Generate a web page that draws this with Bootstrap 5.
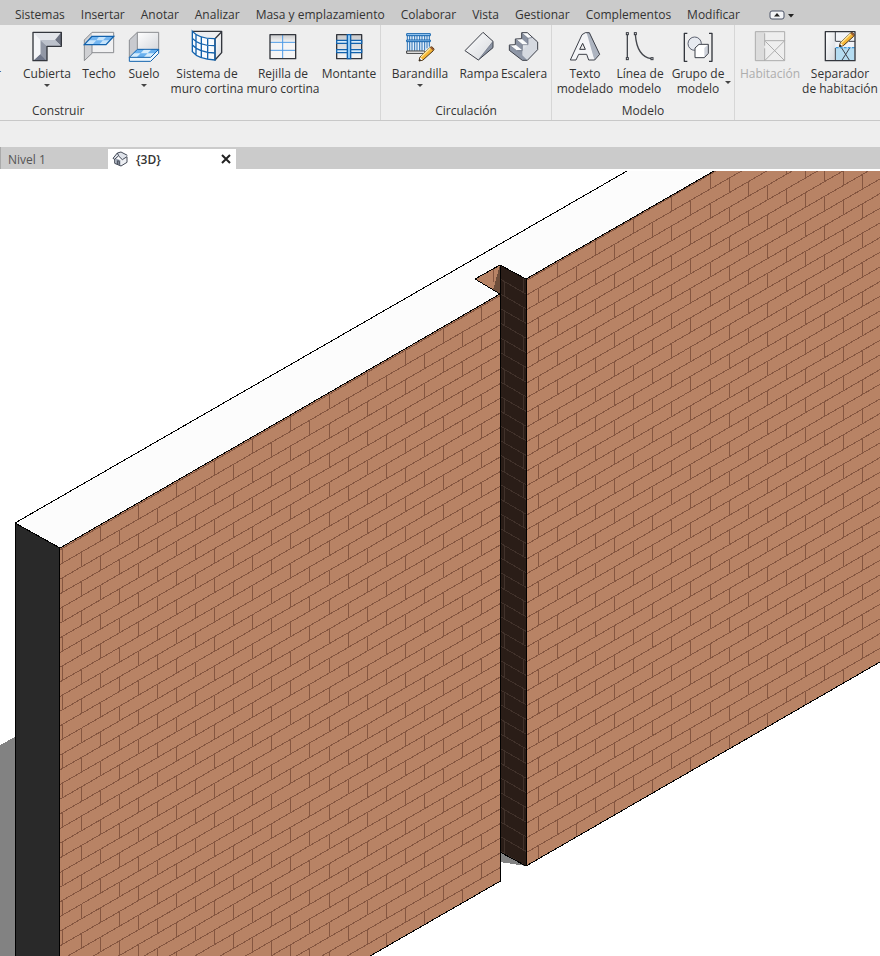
<!DOCTYPE html>
<html lang="es">
<head>
<meta charset="utf-8">
<meta name="viewport" content="width=device-width, initial-scale=1">
<title>{3D}</title>
<link href="https://cdn.jsdelivr.net/npm/bootstrap@5.3.0/dist/css/bootstrap.min.css" rel="stylesheet">
<style>
body { font-family: "Open Sans", "Noto Sans", sans-serif; font-size: 12px; line-height: 15px; color: #333; background: #fff; overflow-x: hidden; }
button { font: inherit; color: inherit; background: none; border: 0; padding: 0; }
.menu-bar { background: #cbcbcb; height: 25px; padding: 4px 0 0 15px; gap: 16px; }
.menu-bar a { color: #333; text-decoration: none; white-space: nowrap; line-height: 21px; }
.menu-bar button { margin-left: 13px; }
.ribbon { background: #eee; border-bottom: 1px solid #c8c8c8; height: 96px; overflow: hidden; }
.panel { border-right: 1px solid #d6d6d6; height: 95px; padding-top: 5px; flex: none; }
.panel:last-child { border-right: 0; flex: 1 0 auto; }
.panel-build { width: 381px; } .panel-stairs { width: 171px; } .panel-model { width: 183px; }
.tools { height: 72px; }
.tool { display: flex; flex: none; flex-direction: column; align-items: center; white-space: nowrap; position: relative; }
.tool svg { width: 32px; height: 32px; margin-bottom: 4px; flex: none; overflow: visible; }
.tool:disabled { color: #adadad; }
.drop::after { content: ""; border: 3px solid transparent; border-top-color: #444; border-bottom: 0; margin-top: 3px; }
.drop-side::after { position: absolute; right: 3px; bottom: 18px; margin: 0; }
.t-20 { width: 20px; } .t-40 { width: 40px; } .t-44 { width: 44px; } .t-50 { width: 50px; } .t-54 { width: 54px; }
.t-66 { width: 66px; } .t-70 { width: 70px; } .t-72 { width: 72px; } .t-78 { width: 78px; } .t-86 { width: 86px; }
.cut { overflow: hidden; align-items: flex-end; padding: 36px 19px 0 0; }
.panel-name { text-align: center; line-height: 17px; }
.first-name { text-align: left; padding-left: 32px; }
.options-bar { background: #eee; height: 26px; }
.view-tabs { background: #cbcbcb; height: 22px; }
.view-tab { width: 108px; padding-left: 7px; color: #555; line-height: 26px; text-align: left; border-left: 1px solid #aaa; }
.view-tab-on { width: 128px; height: 20px; margin-top: 2px; background: #fff; padding: 0 5px 0 4px; }
.view-tab-on b { font-weight: 600; margin-left: 7px; }
.canvas3d { padding-top: 2px; }
.canvas3d svg { display: block; width: 100%; height: auto; }
.k { fill: none; stroke: #33363d; stroke-width: 4; stroke-linejoin: round; }
.k-thin { fill: none; stroke: #3d4049; stroke-width: 3; stroke-linejoin: round; }
.g { fill: none; stroke: #8a8c90; stroke-width: 3; }
.b { fill: none; stroke: #1262ad; stroke-width: 4; }
.b-thin { fill: none; stroke: #1262ad; stroke-width: 3; }
</style>
<script src="https://cdn.jsdelivr.net/npm/bootstrap@5.3.0/dist/js/bootstrap.bundle.min.js"></script>
</head>
<body>
<svg width="0" height="0" class="position-absolute" aria-hidden="true">
  <defs>
    <linearGradient id="gSheet" x1="0" y1="0" x2="1" y2="1"><stop offset="0" stop-color="#fff"/><stop offset="1" stop-color="#d5d8dd"/></linearGradient>
    <linearGradient id="gDown" x1="0" y1="0" x2="0" y2="1"><stop offset="0" stop-color="#c9cacc"/><stop offset="1" stop-color="#f6f6f6"/></linearGradient>
    <g id="pencil">
      <path d="M0 43 L3 31 L34 2 Q38 -2 43 4 Q47 8 43 12 L12 40 Z" fill="#f5b637" stroke="#4a3216" stroke-width="3"/>
      <path d="M6 31 L34 4" stroke="#ffe99a" stroke-width="4"/>
      <path d="M33 3 Q38 -1 42 4 Q46 9 42 12 Z" fill="#9b5b34"/>
      <path d="M2 41 L4 32 L11 39 Z" fill="#fff"/><path d="M0 43 L2 36 L7 41 Z" fill="#222"/>
    </g>
  </defs>
</svg>

<nav class="menu-bar d-flex">
  <a href="#">Sistemas</a><a href="#">Insertar</a><a href="#">Anotar</a><a href="#">Analizar</a><a href="#">Masa y emplazamiento</a><a href="#">Colaborar</a><a href="#">Vista</a><a href="#">Gestionar</a><a href="#">Complementos</a><a href="#">Modificar</a>
  <button type="button" class="d-flex align-items-center" aria-label="Minimizar cinta">
    <svg width="26" height="10" viewBox="0 0 26 10"><rect x="1" y="1" width="14" height="8" rx="2" fill="#f2f3f6" stroke="#4b5266"/><path d="M5 6.500 L8 3 L11 6.500 Z" fill="#222"/><path d="M19 4 H25 L22 7.500 Z" fill="#222"/></svg>
  </button>
</nav>

<div class="ribbon d-flex">
  <section class="panel panel-build">
    <div class="tools d-flex">
      <button type="button" class="tool t-20 cut">Pilar</button>
      <button type="button" class="tool drop t-54"><svg viewBox="91 90 96 96"><path d="M97 97 H182 V139 H139 V182 H97 Z" fill="#e8eaee"/><path d="M97 97 H182 L163 120 H119 Z" fill="#e3e5ea"/><path d="M182 97 L163 120 L182 139 Z" fill="#6d7382"/><path d="M119 120 H163 L182 139 H139 Z" fill="#bcc1cb"/><path d="M119 120 L139 139 V182 L119 162 Z" fill="#9298a6"/><path d="M97 182 L119 162 L139 182 Z" fill="#70778a"/><path d="M97 97 L119 120 V162 L97 182 Z" fill="#f4f5f8"/><path class="k" d="M97 97 H182 V139 H139 V182 H97 Z"/></svg>Cubierta</button>
      <button type="button" class="tool t-50"><svg viewBox="249 90 96 96"><path d="M276 97 H341 V158 H276 Z" fill="#f1f1f2"/><path d="M253 120 L276 97 V160 L253 182 Z" fill="#cfd0d3"/><path class="g" d="M253 134 V182 L276 160 V135 M253 120 L276 97 H341 V158 H276 M253 120 V134"/><path d="M253 134 L276 109 H341 L318 134 Z" fill="#c7e4fb"/><path d="M276 109 H298 L289 121 H265 Z M320 109 H341 L330 121 H309 Z M289 121 H309 L297 134 H277 Z" fill="#73b5f0"/><path class="b" d="M253 134 L276 109 H341 L318 134 Z"/></svg>Techo</button>
      <button type="button" class="tool drop t-40"><svg viewBox="384 90 96 96"><path d="M412 97 H476 V150 H412 Z" fill="url(#gSheet)"/><path d="M388 120 L412 97 V150 L388 172 Z" fill="#c8cacf"/><path class="g" d="M388 172 V120 L412 97 H476 V150 M412 97 V148"/><path d="M388 172 L412 148 H476 L452 172 Z" fill="#d5ecfc"/><path d="M412 148 H433 L422 160 H400 Z M455 148 H476 L464 160 H443 Z M422 160 H443 L431 172 H410 Z" fill="#69b1ef"/><path d="M388 172 H452 L476 148 V160 L452 184 H388 Z" fill="#ecf7fe"/><path class="b-thin" d="M388 172 L412 148 H476 V160 L452 184 H388 Z M388 172 H452 L476 148"/></svg>Suelo</button>
      <button type="button" class="tool t-86"><svg viewBox="573 90 96 96"><path d="M577 94 H665 L645 116 Q598 117 577 94 Z" fill="#eceef1"/><path d="M577 94 Q598 117 645 116 V180 Q595 178 577 155 Z" fill="#f8fbfe"/><path d="M645 116 L665 96 V158 L645 180 Z" fill="url(#gSheet)"/><path class="k" d="M577 94 H665 V158 L645 180 V116 L665 95"/><path class="b" d="M577 94 Q598 117 645 116 V180 Q595 178 577 155 Z M577 115 Q598 138 645 137 M577 135 Q598 158 645 159 M588 103 V165 M604 111 V173 M623 115 V178"/></svg>Sistema de<br>muro cortina</button>
      <button type="button" class="tool t-66"><svg viewBox="77 90 96 96"><rect x="86" y="104" width="77" height="72" fill="#f5f5f6"/><rect x="86" y="104" width="77" height="23" fill="url(#gDown)"/><path d="M124 104 V176 M86 127 H163 M86 151 H163" fill="none" stroke="#4c9ae6" stroke-width="3"/><rect class="k" x="86" y="104" width="77" height="72"/></svg>Rejilla de<br>muro cortina</button>
      <button type="button" class="tool t-66"><svg viewBox="279 90 96 96"><rect x="290" y="104" width="75" height="72" fill="url(#gDown)"/><rect class="k" x="290" y="104" width="75" height="72"/><path d="M290 121 H365 V130 H290 Z M290 149 H365 V158 H290 Z" fill="#d6ecfc" stroke="#1262ad" stroke-width="4"/><path d="M322 104 H332 V176 H322 Z" fill="#8fcaf7" stroke="#1262ad" stroke-width="4"/></svg>Montante</button>
    </div>
    <div class="panel-name first-name">Construir</div>
  </section>

  <section class="panel panel-stairs">
    <div class="tools d-flex">
      <button type="button" class="tool drop t-78"><svg viewBox="495 90 96 96"><path d="M504 101 H573 V153 H504 Z" fill="#e3effa"/><path d="M505 108 V152 M512 108 V152 M519 108 V152 M527 108 V152 M534 108 V152 M542 108 V152 M549 108 V152 M557 108 V150 M564 108 V145 M571 108 V140" stroke="#2a70b4" stroke-width="3"/><path d="M503 101 H574 V107 H503 Z M503 120 H574 V125 H503 Z" fill="#a6d4f8" stroke="#1262ad" stroke-width="3"/><path d="M503 153 H558 V160 H503 Z" fill="#fff" stroke="#333" stroke-width="3"/><use href="#pencil" x="540" y="140"/></svg>Barandilla</button>
      <button type="button" class="tool t-40"><svg viewBox="40 90 96 96"><path d="M46 152 L100 97 L130 124 L86 180 Z" fill="url(#gSheet)"/><path d="M130 124 V143 L86 180 Z" fill="#8c95a5"/><path class="k-thin" d="M46 152 L100 97 L130 124 V143 L86 180 Z"/><path d="M130 124 L86 180" stroke="#666d7c" stroke-width="2"/></svg>Rampa</button>
      <button type="button" class="tool t-50"><svg viewBox="177 90 96 96"><path d="M181 137 L196 135 L200 132 V116 L214 115 L219 111 V97 H235 L266 126 V149 L235 181 H220 L181 151 Z" fill="#dfe2e8"/><path d="M181 135 L203 152 H220 L235 165 V181 H220 L181 151 Z" fill="#8f97a7"/><path d="M181 134 L199 134 L220 151 H203 Z M200 116 H217 L237 133 H220 Z M219 98 H235 L251 112 L236 114 Z" fill="#fafbfc"/><path d="M200 118 L220 134 V151 L200 134 Z M219 100 L237 115 V133 L219 117 Z M203 151 H220 L235 165 H220 Z" fill="#8b93a3"/><path d="M235 181 L220 166 V151 L237 134 V115 L251 112 L266 127 V149 Z" fill="#d5d9e0"/><path class="k-thin" d="M181 135 L199 134 V117 L218 116 V98 H235 L266 126 V149 L235 181 H220 L181 151 Z"/><path d="M181 135 L203 152 H220 V134 H237 V115 L251 112 M200 117 L220 134 M219 99 L237 115" fill="none" stroke="#6a7182" stroke-width="2"/></svg>Escalera</button>
    </div>
    <div class="panel-name">Circulación</div>
  </section>

  <section class="panel panel-model">
    <div class="tools d-flex">
      <button type="button" class="tool t-66"><svg viewBox="357 90 96 96"><path d="M405 98 L419 98 L449 163 L433 181 Z" fill="#adb4c0"/><path d="M361 180 L396 104 L405 98 H410 L433 180 H416 L411 163 H389 L380 180 Z" fill="#f4f5f7"/><path d="M389 148 L398 130 L406 148 Z" fill="#eee" stroke="#33363d" stroke-width="3"/><path class="k-thin" d="M361 180 L396 104 L406 98 H418 L449 163 L434 180 H416 L410 163 H386 L378 180 Z"/></svg>Texto<br>modelado</button>
      <button type="button" class="tool t-44"><svg viewBox="523 90 96 96"><path d="M533 103 V174 M557 103 C560 145 573 171 605 176" fill="none" stroke="#44474d" stroke-width="4"/><g fill="#fff" stroke="#33363d" stroke-width="3"><rect x="530" y="98" width="6" height="6"/><rect x="530" y="173" width="6" height="6"/><rect x="554" y="98" width="6" height="6"/><rect x="604" y="173" width="6" height="6"/></g></svg>Línea de<br>modelo</button>
      <button type="button" class="tool drop drop-side t-72"><svg viewBox="124 90 96 96"><path d="M140 100 H131 V184 H140 M205 100 H214 V184 H205" class="k"/><circle cx="162" cy="131" r="20" fill="#e7eaf0" stroke="#5c6170" stroke-width="3"/><path d="M163 144 L175 133 H203 V160 L191 173 H163 Z" fill="#cfd3db"/><path d="M163 144 H191 V173 H163 Z M163 144 L175 133 H203 L191 144 Z" fill="#fff"/><path class="k-thin" d="M163 144 L175 133 H203 V160 L191 173 H163 Z"/></svg>Grupo de<br>modelo</button>
    </div>
    <div class="panel-name">Modelo</div>
  </section>

  <section class="panel">
    <div class="tools d-flex">
      <button type="button" class="tool t-70" disabled><svg viewBox="342 90 96 96"><path d="M346 95 H374 V182 H346 Z" fill="#dcdcdc"/><path d="M346 95 H434 V182 H346 Z M374 100 V137 M374 122 H434 M374 145 V182 M376 124 L434 182 M434 122 L374 182" fill="none" stroke="#adadad" stroke-width="3"/></svg>Habitación</button>
      <button type="button" class="tool t-70"><svg viewBox="555 90 96 96"><path d="M559 95 H648 V182 H559 Z" fill="#f1f3f7"/><path d="M559 95 H589 V182 H559 Z" fill="url(#gSheet)"/><path d="M590 144 H647 V181 H590 Z" fill="#b5dcf1"/><path d="M589 95 V124 M589 144 V182 M590 124 H605 M630 124 H648 M608 144 L632 182 M632 144 L608 182" class="k-thin"/><path d="M590 143 H647" stroke="#3c99dc" stroke-width="4" stroke-dasharray="9 3"/><path class="k" d="M559 95 H648 V182 H559 Z"/><use href="#pencil" x="601" y="97"/></svg>Separador<br>de habitación</button>
    </div>
  </section>
</div>

<div class="options-bar"></div>
<div class="view-tabs d-flex">
  <button type="button" class="view-tab">Nivel 1</button>
  <div class="view-tab-on d-flex align-items-center">
    <svg width="17" height="16" viewBox="0 0 51 48"><path d="M10 22 L26 28 V45 L10 38 Z" fill="#9ea6b4"/><path d="M26 28 L45 18 V34 L26 45 Z" fill="#eef0f4"/><path d="M3 22 L15 6 L26 3 L46 12 L44 19 L28 27 L20 16 L8 25 Z" fill="#dfe3ea"/><path d="M20 15 L31 26 L45 17 V34 L27 45 L8 37 V24 M3 22 L16 6 L27 3 L46 13 M3 22 L8 25 L20 14 L16 6 M17 39 V29 L22 31 V41" fill="none" stroke="#444a57" stroke-width="3"/></svg>
    <b>{3D}</b>
    <button type="button" class="ms-auto d-flex" aria-label="Cerrar"><svg width="10" height="10" viewBox="0 0 10 10"><path d="M1 1 L9 9 M9 1 L1 9" stroke="#222" stroke-width="2"/></svg></button>
  </div>
</div>

<main class="canvas3d">
  <svg viewBox="0 171 880 785" role="img" aria-label="Muro de ladrillo en vista 3D">
    <defs>
      <clipPath id="cLeft"><path d="M60 548 L500 294 V881 L370 956 H60 Z"/></clipPath>
      <clipPath id="cRight"><path d="M526 279 L714 171 H880 V662 L526 866 Z"/></clipPath>
      <clipPath id="cDark"><path d="M500 265 L526 279 V866 L500 852 Z"/></clipPath>
    </defs>
    <g shape-rendering="crispEdges">
      <path d="M0 745 L15 737 V956 H0 Z" fill="#828282"/>
      <path d="M500 851 L526 866 L500 862 Z" fill="#828282"/>
      <path d="M15 523 L627 171 H714 L526 279 L500 265 L475 279 L500 294 L60 548 Z" fill="#fcfcfc"/>
      <path d="M15 523 L60 548 V956 H15 Z" fill="#292929"/>
      <path d="M60 548 L500 294 V881 L370 956 H60 Z M526 279 L714 171 H880 V662 L526 866 Z M475 279 L500 265 V294 Z" fill="#b88365"/>
      <path d="M500 265 V294 L493 290 Z" fill="#6d4d3a"/>
      <path d="M493.500 269 V282" stroke="#855640"/>
      <path d="M500 265 L526 279 V866 L500 852 Z" fill="#2a1d17"/>
      <path id="jLeft" clip-path="url(#cLeft)" fill="none" stroke="#855640"/>
      <path id="jRight" clip-path="url(#cRight)" fill="none" stroke="#855640"/>
      <path id="jDark" clip-path="url(#cDark)" fill="none" stroke="#40312a"/>
      <path d="M627 171 L15 523 L60 548 L500 294 L475 279 L500 265 L526 279 L714 171 M15.500 523 V956 M59.500 548 V956 M500.500 265 V881 L370 956 M500 852 L526 866 L880 662 M526.500 279 V866" fill="none" stroke="#000"/>
    </g>
  </svg>
</main>
<script>
// Running-bond brick joints: bed lines follow the wall's slope, head joints alternate by course.
function joints(x0, y0, pitch, course, slope, xa, xb, ya, yb) {
  let d = '';
  const rise = v => y0 + slope * (v - x0);
  const lo = Math.floor((ya - Math.max(rise(xa), rise(xb))) / course) - 1;
  const hi = Math.ceil((yb - Math.min(rise(xa), rise(xb))) / course) + 1;
  for (let k = lo; k <= hi; k++) d += `M${xa} ${rise(xa) + k * course}L${xb} ${rise(xb) + k * course}`;
  for (let i = Math.ceil((xa - x0) / pitch); x0 + i * pitch <= xb; i++) {
    const x = x0 + i * pitch;
    for (let k = lo; k <= hi; k++) if ((k + i) % 2 === 0) d += `M${x} ${rise(x) + k * course}v${course}`;
  }
  return d;
}
const put = (id, d) => document.getElementById(id).setAttribute('d', d);
put('jLeft', joints(62.3, 548.5, 19.05, 14.667, -0.5775, 60, 500, 290, 960));
put('jRight', joints(62.3, 548.5, 19.05, 14.667, -0.5775, 526, 880, 165, 870));
put('jDark', joints(504.3, 281.5, 19, 14.667, 0.577, 500, 526, 260, 870));
</script>
</body>
</html>
